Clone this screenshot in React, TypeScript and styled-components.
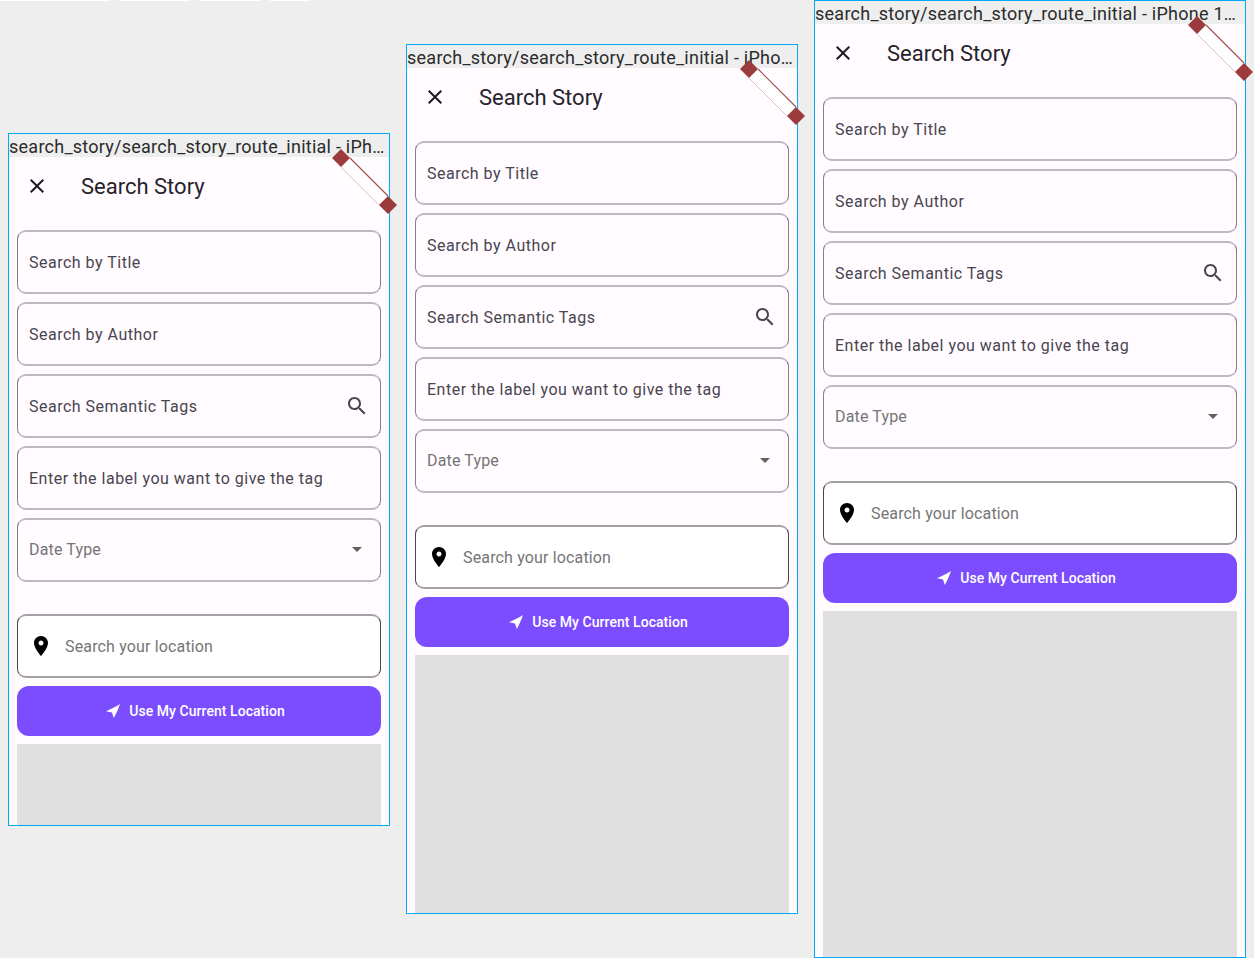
import React from "react";
import styled, { createGlobalStyle } from "styled-components";

const Global = createGlobalStyle`
  html, body { margin: 0; padding: 0; height: 958px; overflow: hidden; background: #eeeeee; }
  * { box-sizing: border-box; }
  body { font-family: Roboto, "Liberation Sans", sans-serif; }
`;

const Canvas = styled.div`
  position: relative;
  display: flex;
  align-items: flex-start;
  gap: 16px;
  height: 958px;
  padding-left: 8px;
  background: #eeeeee;
`;

const Strips = styled.div`
  position: absolute;
  top: 0;
  left: 0;
  display: flex;
  gap: 10px;
`;

const Strip = styled.div<{ $w: number }>`
  width: ${(p) => p.$w}px;
  height: 1px;
  background: #ffffff;
`;

const Frame = styled.section<{ $w: number; $h: number; $top: number }>`
  position: relative;
  width: ${(p) => p.$w}px;
  height: ${(p) => p.$h}px;
  margin-top: ${(p) => p.$top}px;
  border: 1px solid #03a9f4;
  background: #fffbff;
  display: flex;
  flex-direction: column;
`;

const DeviceName = styled.div`
  flex: none;
  height: 23px;
  line-height: 26px;
  background: #eeeeee;
  color: #2b2b2b;
  font-size: 18px;
  letter-spacing: 0.25px;
  white-space: nowrap;
  overflow: hidden;
  text-overflow: ellipsis;
  padding-right: 2px;
`;

const AppBar = styled.header`
  flex: none;
  height: 73px;
  padding: 0 0 16px 16px;
  display: flex;
  align-items: center;
  gap: 32px;
  color: #1d1b20;
`;

const CloseButton = styled.span`
  display: flex;
  width: 24px;
  height: 24px;
`;

const Heading = styled.h1`
  margin: 0;
  padding-top: 2px;
  font-size: 22px;
  font-weight: 400;
  line-height: 28px;
  color: #26242a;
`;

const Form = styled.div`
  flex: 1;
  min-height: 0;
  padding: 0 8px;
  display: flex;
  flex-direction: column;
  gap: 8px;
`;

const Field = styled.div<{ $white?: boolean; $dark?: boolean }>`
  flex: none;
  height: 64px;
  border-style: solid;
  border-width: 2px 1px;
  border-color: ${(p) => (p.$dark ? "#a3a1a3 #49454f" : "#bdb9c0 #837f88")};
  border-radius: 9px;
  padding: 0 11px;
  display: flex;
  align-items: center;
  gap: 12px;
  background: ${(p) => (p.$white ? "#ffffff" : "#fffbff")};
`;

const FieldText = styled.span<{ $muted?: boolean }>`
  flex: 1;
  font-size: 16px;
  letter-spacing: ${(p) => (p.$muted ? "0.15px" : "0.5px")};
  line-height: 24px;
  padding-top: ${(p) => (p.$muted ? "0" : "2px")};
  color: ${(p) => (p.$muted ? "#757575" : "#49454f")};
`;

const LocationText = styled(FieldText)`
  padding-top: 2px;
`;

const FieldIcon = styled.svg`
  flex: none;
  width: 24px;
  height: 24px;
  fill: ${(p) => p.color ?? "#49454f"};
`;

const Spacer = styled.div`
  flex: none;
  height: 16px;
`;

const LocateButton = styled.div`
  flex: none;
  height: 50px;
  padding-right: 8px;
  border-radius: 12px;
  background: #7c4dff;
  color: #ffffff;
  font-size: 14px;
  font-weight: 500;
  letter-spacing: 0.05px;
  display: flex;
  align-items: center;
  justify-content: center;
  gap: 8px;
`;

const MapArea = styled.div`
  flex: 1;
  min-height: 0;
  background: #e0e0e0;
`;

const Handle = styled.svg`
  position: absolute;
  top: 13px;
  right: -14px;
  width: 76px;
  height: 76px;
  overflow: visible;
  pointer-events: none;
`;

const Close = () => (
  <CloseButton>
    <svg viewBox="0 0 24 24" width="24" height="24" fill="#1d1b20">
      <path d="M19 6.41 17.59 5 12 10.59 6.41 5 5 6.41 10.59 12 5 17.59 6.41 19 12 13.41 17.59 19 19 17.59 13.41 12z" />
    </svg>
  </CloseButton>
);

const SearchIcon = () => (
  <FieldIcon viewBox="0 0 24 24">
    <path d="M15.5 14h-.79l-.28-.27C15.41 12.59 16 11.11 16 9.5 16 5.91 13.09 3 9.5 3S3 5.91 3 9.5 5.91 16 9.5 16c1.61 0 3.09-.59 4.23-1.57l.27.28v.79l5 4.99L20.49 19l-4.99-5zm-6 0C7.01 14 5 11.99 5 9.5S7.01 5 9.5 5 14 7.01 14 9.5 11.99 14 9.5 14z" />
  </FieldIcon>
);

const DropIcon = () => (
  <FieldIcon viewBox="0 0 24 24" color="#616161">
    <path d="M7 9l5 5 5-5z" />
  </FieldIcon>
);

const PinIcon = () => (
  <FieldIcon viewBox="0 0 24 24" color="#000000">
    <path d="M12 2C8.13 2 5 5.13 5 9c0 5.25 7 13 7 13s7-7.75 7-13c0-3.87-3.13-7-7-7zm0 9.5c-1.38 0-2.5-1.12-2.5-2.5s1.12-2.5 2.5-2.5 2.5 1.12 2.5 2.5-1.12 2.5-2.5 2.5z" />
  </FieldIcon>
);

const PlaneIcon = () => (
  <svg viewBox="0 0 16 16" width="16" height="16" fill="#ffffff">
    <path d="M15 1C11 3.6 6 6.2 1 8.2L7 9.4 8.8 15C11.2 10.6 13.4 5.8 15 1Z" />
  </svg>
);

const ResizeHandle = () => (
  <Handle viewBox="0 0 76 76">
    <polygon points="23,11 61,49 52,58 14,20" fill="#ffffff" />
    <line x1="23" y1="11" x2="61" y2="49" stroke="#a34a4a" strokeWidth="1.1" />
    <line x1="14" y1="20" x2="52" y2="58" stroke="#dcc0c0" strokeWidth="1" />
    <polygon points="14,2 23,11 14,20 5,11" fill="#9c3b3b" />
    <polygon points="61,49 70,58 61,67 52,58" fill="#9c3b3b" />
  </Handle>
);

const frames = [
  { w: 382, h: 693, top: 133, name: "search_story/search_story_route_initial - iPhone 13 mini" },
  { w: 392, h: 870, top: 44, name: "search_story/search_story_route_initial - iPhone 13 mini" },
  { w: 432, h: 958, top: 0, name: "search_story/search_story_route_initial - iPhone 13 mini" },
];

const Device = ({ w, h, top, name }: (typeof frames)[number]) => (
  <Frame $w={w} $h={h} $top={top}>
    <DeviceName>{name}</DeviceName>
    <AppBar>
      <Close />
      <Heading>Search Story</Heading>
    </AppBar>
    <Form>
      <Field><FieldText>Search by Title</FieldText></Field>
      <Field><FieldText>Search by Author</FieldText></Field>
      <Field><FieldText>Search Semantic Tags</FieldText><SearchIcon /></Field>
      <Field><FieldText>Enter the label you want to give the tag</FieldText></Field>
      <Field><FieldText $muted>Date Type</FieldText><DropIcon /></Field>
      <Spacer />
      <Field $white $dark><PinIcon /><LocationText $muted>Search your location</LocationText></Field>
      <LocateButton><PlaneIcon />Use My Current Location</LocateButton>
      <MapArea />
    </Form>
    <ResizeHandle />
  </Frame>
);

export default function App() {
  return (
    <Canvas>
      <Global />
      <Strips>
        {[110, 70, 60, 40].map((w) => <Strip key={w} $w={w} />)}
      </Strips>
      {frames.map((f) => <Device key={f.w} {...f} />)}
    </Canvas>
  );
}
